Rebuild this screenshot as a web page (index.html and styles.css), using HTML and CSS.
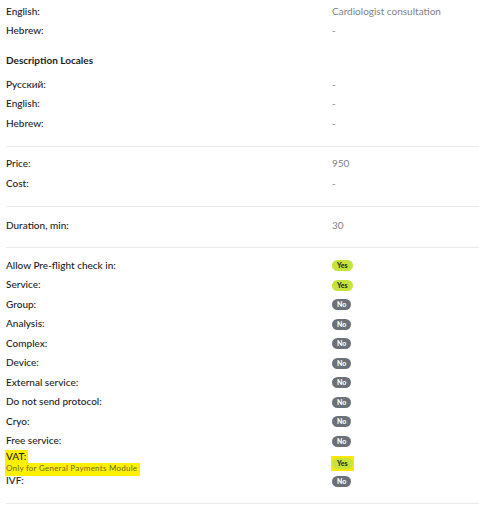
FILE: index.html
```html
<!DOCTYPE html>
<html>
<head>
<meta charset="utf-8">
<link rel="stylesheet" href="styles.css">
</head>
<body>
<div class="page">
  <section class="sec sec-a">
    <div class="row"><span class="lbl">English:</span><span class="val">Cardiologist consultation</span></div>
    <div class="row"><span class="lbl">Hebrew:</span><span class="val">-</span></div>
    <h3 class="heading">Description Locales</h3>
    <div class="row"><span class="lbl">Русский:</span><span class="val">-</span></div>
    <div class="row"><span class="lbl">English:</span><span class="val">-</span></div>
    <div class="row"><span class="lbl">Hebrew:</span><span class="val">-</span></div>
  </section>
  <section class="sec sec-b">
    <div class="row"><span class="lbl">Price:</span><span class="val">950</span></div>
    <div class="row"><span class="lbl">Cost:</span><span class="val">-</span></div>
  </section>
  <section class="sec sec-c">
    <div class="row"><span class="lbl">Duration, min:</span><span class="val">30</span></div>
  </section>
  <section class="sec sec-d">
    <div class="row"><span class="lbl">Allow Pre-flight check in:</span><span class="val"><span class="badge yes">Yes</span></span></div>
    <div class="row"><span class="lbl">Service:</span><span class="val"><span class="badge yes">Yes</span></span></div>
    <div class="row"><span class="lbl">Group:</span><span class="val"><span class="badge no">No</span></span></div>
    <div class="row"><span class="lbl">Analysis:</span><span class="val"><span class="badge no">No</span></span></div>
    <div class="row"><span class="lbl">Complex:</span><span class="val"><span class="badge no">No</span></span></div>
    <div class="row"><span class="lbl">Device:</span><span class="val"><span class="badge no">No</span></span></div>
    <div class="row"><span class="lbl">External service:</span><span class="val"><span class="badge no">No</span></span></div>
    <div class="row"><span class="lbl">Do not send protocol:</span><span class="val"><span class="badge no">No</span></span></div>
    <div class="row"><span class="lbl">Cryo:</span><span class="val"><span class="badge no">No</span></span></div>
    <div class="row"><span class="lbl">Free service:</span><span class="val"><span class="badge no">No</span></span></div>
    <div class="row row-vat">
      <span class="lbl lbl-stack"><span class="mark mark-vat">VAT:</span><span class="mark sub">Only for General Payments Module</span></span>
      <span class="val"><span class="mark-badge"><span class="badge yes">Yes</span></span></span>
    </div>
    <div class="row"><span class="lbl">IVF:</span><span class="val"><span class="badge no">No</span></span></div>
  </section>
</div>
</body>
</html>
```
FILE: styles.css
```css
html, body {
  margin: 0;
  padding: 0;
  background: #ffffff;
}
body {
  font-family: Lato, "Open Sans", sans-serif;
  font-size: 10px;
  color: #1c1c1c;
}
.page {
  padding-left: 6px;
}
.sec {
  border-bottom: 1px solid #e9e9e9;
}
.sec-a { padding: 1px 0 13px; }
.sec-b { padding: 7px 0 13px; }
.sec-c { padding: 9px 0 12px; }
.sec-d { padding: 7px 0 13px; }
.row {
  display: grid;
  grid-template-columns: 326px 1fr;
  align-items: center;
  height: 19.5px;
}
.lbl {
  font-weight: 500;
  color: #1c1c1c;
}
.val {
  color: #7f7f7f;
  font-weight: 400;
}
.heading {
  margin: 10px 0 4px;
  height: 20px;
  line-height: 20px;
  font-size: 10px;
  font-weight: 700;
  color: #1c1c1c;
}
.badge {
  display: inline-block;
  height: 11px;
  line-height: 11px;
  padding: 0 5px;
  border-radius: 6px;
  font-size: 7px;
  font-weight: 900;
  vertical-align: middle;
}
.badge.yes {
  background: #c4e43c;
  color: #2a2a1a;
}
.badge.no {
  background: #6b7179;
  color: #ffffff;
}
.row-vat {
  height: 20.5px;
}
.lbl-stack {
  display: flex;
  flex-direction: column;
  align-items: flex-start;
  align-self: start;
  margin-left: -1px;
}
.mark {
  background: #fff000;
}
.mark-vat {
  line-height: 13px;
  padding: 0 2px 0 1px;
}
.sub {
  font-size: 8px;
  line-height: 10px;
  letter-spacing: 0.25px;
  font-weight: 400;
  color: #6b6b20;
  padding: 0 3px 3px 1px;
}
.mark-badge {
  display: inline-block;
  background: #ffe600;
  padding: 2px 1px;
  margin-left: -1px;
  line-height: 0;
}
```
